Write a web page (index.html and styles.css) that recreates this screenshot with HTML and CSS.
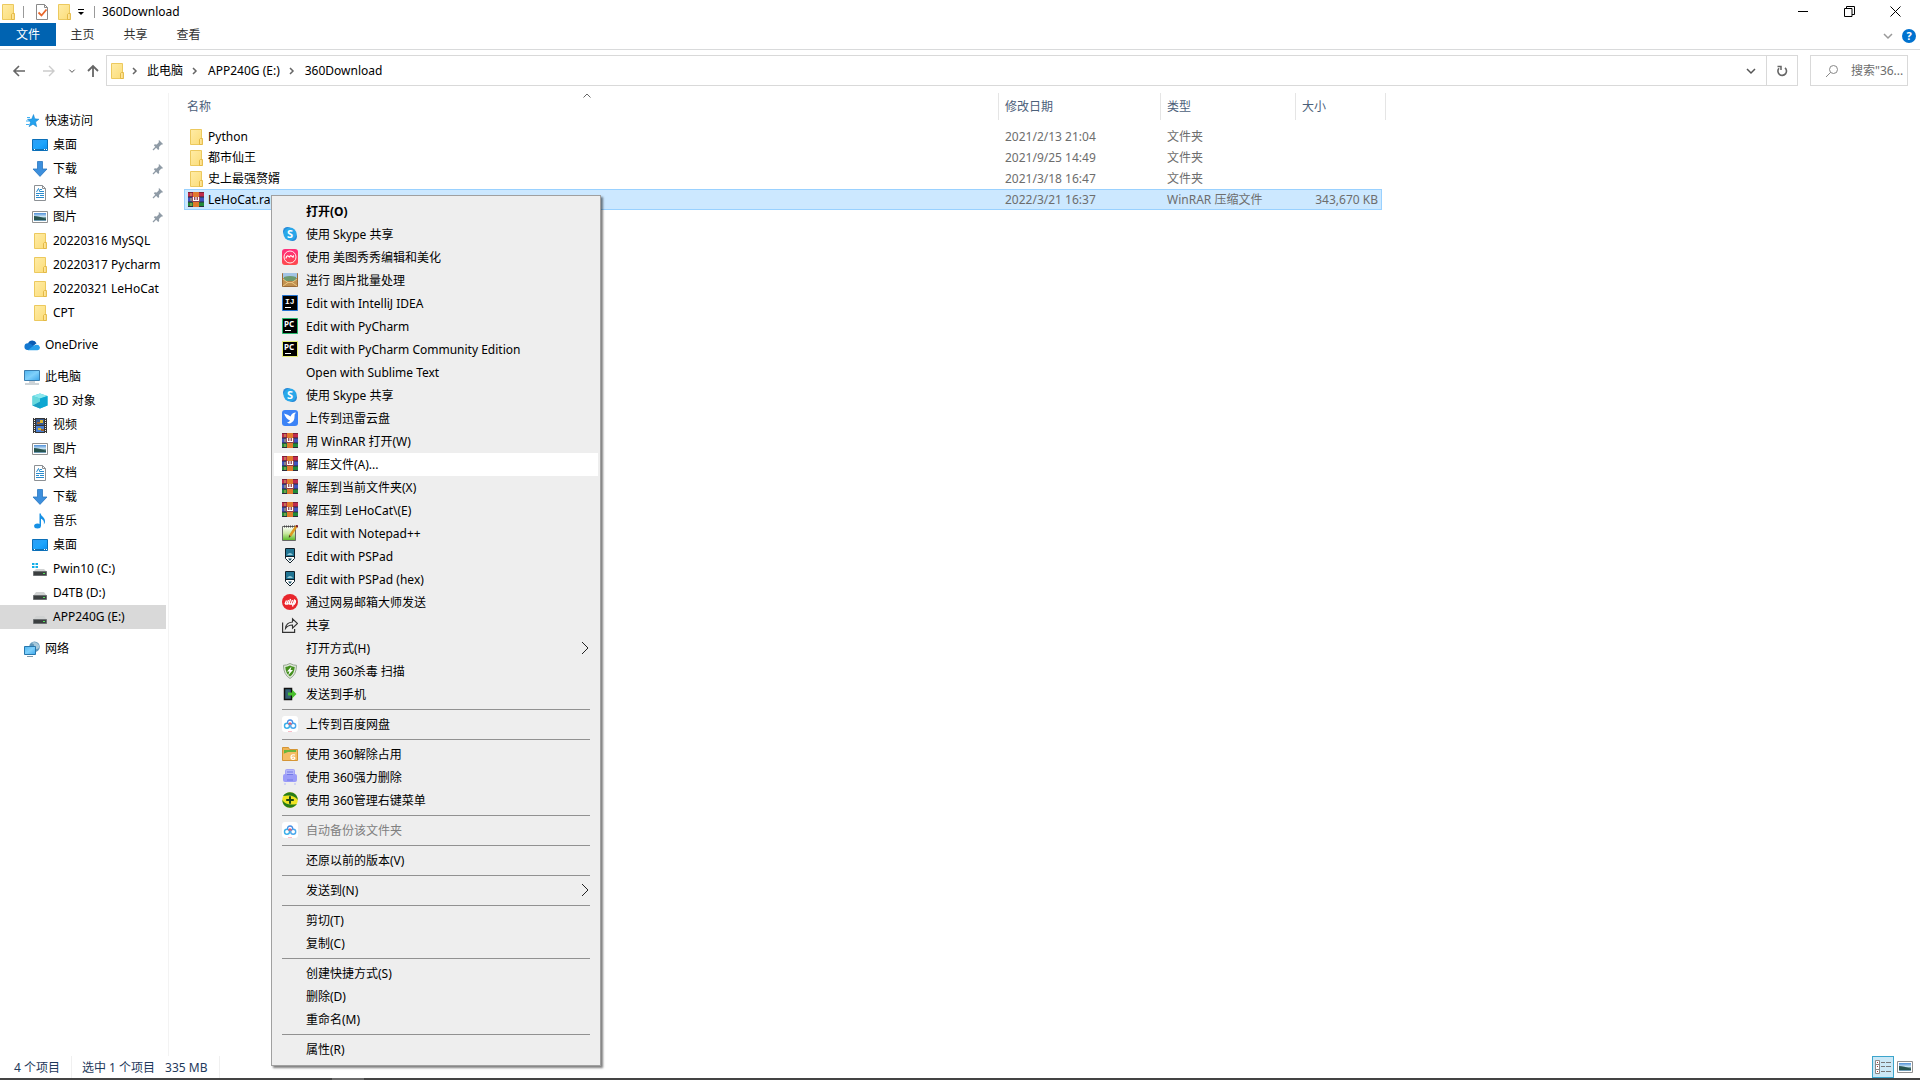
FILE: index.html
```html
<!DOCTYPE html>
<html lang="zh-CN">

<head>
    <meta charset="UTF-8">
    <meta name="viewport" content="width=device-width, initial-scale=1.0">
    <title>360Download</title>
    <link rel="stylesheet" href="styles.css">
</head>

<body>
    <!-- Icon sprite -->
    <svg class="sprite" aria-hidden="true">
        <defs>
            <linearGradient id="gFolder" x1="0" y1="0" x2="1" y2="1">
                <stop offset="0" stop-color="#ffeca6"/>
                <stop offset="1" stop-color="#fbdc78"/>
            </linearGradient>
            <linearGradient id="gScreen" x1="0" y1="0" x2="1" y2="1">
                <stop offset="0" stop-color="#2f9df4"/>
                <stop offset="0.5" stop-color="#1ea5fd"/>
                <stop offset="1" stop-color="#0a8ff0"/>
            </linearGradient>
            <linearGradient id="gPc" x1="0" y1="0" x2="1" y2="1">
                <stop offset="0" stop-color="#4fb4ef"/>
                <stop offset="0.5" stop-color="#7fd0fb"/>
                <stop offset="1" stop-color="#3ca6ea"/>
            </linearGradient>
            <linearGradient id="gPhoto" x1="0" y1="0" x2="0" y2="1">
                <stop offset="0" stop-color="#4f8fd8"/>
                <stop offset="0.5" stop-color="#d8eef8"/>
                <stop offset="0.6" stop-color="#3c6a68"/>
                <stop offset="1" stop-color="#7ba6c4"/>
            </linearGradient>
            <linearGradient id="gMeitu" x1="0" y1="0" x2="0" y2="1">
                <stop offset="0" stop-color="#ff2d7c"/>
                <stop offset="1" stop-color="#ff4a4c"/>
            </linearGradient>
            <linearGradient id="gPad" x1="0" y1="0" x2="0" y2="1">
                <stop offset="0" stop-color="#ffffff"/>
                <stop offset="0.5" stop-color="#c8e8a0"/>
                <stop offset="1" stop-color="#56b822"/>
            </linearGradient>
        </defs>

        <symbol id="folder" viewBox="0 0 16 16">
            <path d="M2.500.5h11v9.200h.8v5.800H2.500z" fill="url(#gFolder)" stroke="#ecc95e"/>
            <path d="M11.500 15.500v-5.200l1-.8h1.800v6z" fill="#ffe596" stroke="#e3b946"/>
        </symbol>
        <symbol id="doc-check" viewBox="0 0 16 16">
            <path d="M2.500.5h8l3 3v12h-11z" fill="#fff" stroke="#8a8a8a"/>
            <path d="M10.500.5v3h3" fill="none" stroke="#8a8a8a"/>
            <path d="M4.500 8.500l3 3 5-6" fill="none" stroke="#e8672c" stroke-width="1.800"/>
        </symbol>
        <symbol id="star" viewBox="0 0 16 16">
            <path d="M9.500 1.500l1.300 4.300 4.200.4-3.400 2.800 1.100 4.700-3.700-2.500-4 2.500 1.500-4.500L3.500 6.200l4.200-.1z" fill="#25a2ee" stroke="#1381cc" stroke-width=".5"/>
            <path d="M3 4.500h3M2 8h3M2 11.500h3" stroke="#3fb1f3" stroke-width="1"/>
        </symbol>
        <symbol id="desktop" viewBox="0 0 16 16">
            <path d="M.5 2.500h15v11H.5z" fill="url(#gScreen)" stroke="#0b6fb8"/>
            <path d="M1 12.500h14" stroke="#126fae"/>
            <path d="M2 12.500h1m9 0h1m1 0h1" stroke="#fff"/>
        </symbol>
        <symbol id="download" viewBox="0 0 16 16">
            <path d="M5.500.5h5v7.500h4.500L8 15.400 1 8h4.500z" fill="#3c8fdd" stroke="#2a76bf" stroke-width=".8"/>
        </symbol>
        <symbol id="document" viewBox="0 0 16 16">
            <path d="M2.500.5h8l3 3v12h-11z" fill="#fff" stroke="#8c9094"/>
            <path d="M10.500.5v3h3" fill="none" stroke="#8c9094"/>
            <path d="M8 4.500h2M4.500 7l2-3.500L8 7M8 6.500h4M4 8.500h8M4 10.500h3M8 10.500h4M4 12.500h8" fill="none" stroke="#2a8ccd"/>
        </symbol>
        <symbol id="picture" viewBox="0 0 16 16">
            <path d="M.5 2.500h15v11H.5z" fill="#fff" stroke="#909090"/>
            <path d="M2 4h12v8H2z" fill="url(#gPhoto)"/>
            <path d="M2 7q5 0 12 3v1H2z" fill="#28544f"/>
        </symbol>
        <symbol id="pin" viewBox="0 0 12 12">
            <path d="M7 1l4 4-1 .8-.6-.2-2.400 2.400.2 2-1 1L1.800 6.200l1-1 2 .2 2.200-2.300-.4-1z" fill="#8f9ba6"/>
            <path d="M4 8l-3 3" stroke="#8f9ba6" stroke-width="1.300"/>
        </symbol>
        <symbol id="onedrive" viewBox="0 0 16 16">
            <path d="M4 6.500a4.600 4.600 0 0 1 8.500-.2L8 10z" fill="#0a5cb4"/>
            <path d="M3.600 13A3.300 3.300 0 0 1 4 6.300q1.400-.3 3 .7l4 3.500L5 13z" fill="#1478d0"/>
            <path d="M3.800 13.200l6-4.700q5-2 6.100 1.800.2 2.500-2.400 2.900z" fill="#28a0ea"/>
        </symbol>
        <symbol id="pc" viewBox="0 0 16 16">
            <path d="M.5 1.500h15v10H.5z" fill="url(#gPc)" stroke="#3b7eaf"/>
            <path d="M5 13h6M1 15h14" stroke="#9aa7b0"/>
        </symbol>
        <symbol id="cube" viewBox="0 0 16 16">
            <path d="M8 .5l7.500 2.500v9.500L8 15.500.5 12.500V3z" fill="#35c4dc"/>
            <path d="M8 .5L15.500 3 8 5.500.5 3z" fill="#8ce8ee"/>
            <path d="M8 5.500L15.500 3v9.500L8 15.500z" fill="#0da7d2"/>
            <path d="M.5 12.500L8 8.500v7z" fill="#1a9ec2"/>
            <path d="M.5 3l7.500 2.500v3l-7.500 4z" fill="#68d8dc"/>
        </symbol>
        <symbol id="video" viewBox="0 0 16 16">
            <path d="M1 1h14v15H1z" fill="#353535"/>
            <path d="M2.500 1v15m11-15v15" stroke="#eee" stroke-dasharray="1 1"/>
            <path d="M4 2h8v6H4z" fill="#36598f"/>
            <path d="M4 9h8v6H4z" fill="#4a7fd0"/>
            <path d="M8 3h3v3H8zM6 11h3v2H6z" fill="#d7b531"/>
            <path d="M5 5h3v2H5zM9 12h3v2H9z" fill="#9b622c"/>
        </symbol>
        <symbol id="music" viewBox="0 0 16 16">
            <ellipse cx="5.500" cy="13" rx="3.400" ry="2.500" fill="#1690e4"/>
            <path d="M7.500 13V.5h1.300c0 3 4.700 3.500 4.200 8.500-.1 1-.7 1.800-1.200 2.400.8-3.400-1-5-2.800-5.600V13z" fill="#1690e4"/>
        </symbol>
        <symbol id="drive" viewBox="0 0 16 16">
            <path d="M4 7h8l3 4H1z" fill="#d0d2d2"/>
            <path d="M1.500 10.500h13v4h-13z" fill="#3b3f40" stroke="#6c7072"/>
            <path d="M11 12.500h2" stroke="#54e45a"/>
        </symbol>
        <symbol id="windrive" viewBox="0 0 16 16">
            <path d="M4 8h8l3 3H1z" fill="#d0d2d2"/>
            <path d="M1.500 10.500h13v4h-13z" fill="#3b3f40" stroke="#6c7072"/>
            <path d="M11 12.500h2" stroke="#54e45a"/>
            <path d="M0 2h2.500v2H0zm3.500 0H6v2H3.500zM0 5h2.500v2H0zm3.500 0H6v2H3.500z" fill="#13aee8"/>
        </symbol>
        <symbol id="network" viewBox="0 0 16 16">
            <circle cx="10.500" cy="5.800" r="5.300" fill="#5f96b9"/>
            <path d="M7 2q4 1 3 3T7 7q3 2 6 1t2-4q-2-3-5-3z" fill="#a9c9da"/>
            <path d="M.5 5.500h11v8H.5z" fill="url(#gPc)" stroke="#2777ad"/>
            <path d="M3 15.500h6" stroke="#7e98a8"/>
        </symbol>
        <symbol id="winrar" viewBox="0 0 16 16">
            <path d="M0 0h16v5H0z" fill="#c02a4c"/>
            <path d="M0 5h16v5H0z" fill="#3f52bd"/>
            <path d="M0 10h16v5H0z" fill="#218a39"/>
            <path d="M0 .5h16" stroke="#7d2036"/>
            <path d="M0 5h16M0 10h16M0 14.500h16" stroke="#2b2b3c"/>
            <path d="M3 1v3m0 2v3m0 2v3" stroke="#c8b85a"/>
            <path d="M5 0h6v15H5z" fill="#e07a2c"/>
            <path d="M4 5h8v5H4z" fill="#8c3f50"/>
            <path d="M5.500 5v3.500h5V5M8 5v3.500" fill="none" stroke="#fff" stroke-width="1.200"/>
        </symbol>
        <symbol id="skype" viewBox="0 0 16 16">
            <circle cx="5.500" cy="5.500" r="4.500" fill="#2789d8"/>
            <circle cx="10.500" cy="10.500" r="4.500" fill="#2789d8"/>
            <circle cx="8" cy="8" r="6.500" fill="#29a7e9"/>
        </symbol>
        <symbol id="meitu" viewBox="0 0 16 16">
            <rect width="16" height="16" rx="3" fill="url(#gMeitu)"/>
            <circle cx="8" cy="8" r="6" fill="none" stroke="#fff" stroke-width=".9"/>
            <path d="M4 9.500q.5-3 2-2.500t1.500 1.500q.5-2.500 2-1.500t1.500 1.500q.5-2 1-2" fill="none" stroke="#fff" stroke-width="1.200"/>
        </symbol>
        <symbol id="batch" viewBox="0 0 16 16">
            <path d="M.5 1.500h15v13H.5z" fill="#b8824a" stroke="#9a6a38"/>
            <path d="M1 1h14v5H1z" fill="#a3c4e5"/>
            <path d="M2 5q6-2 12 0v4H2z" fill="#6d9a70"/>
            <path d="M1 7l5 4h4l5-4v7H1z" fill="#c29150"/>
            <path d="M1 14l5-3.500h4l5 3.500M1 7l5 3.500m9-3.500l-5 3.500" fill="none" stroke="#f2d491" stroke-width=".8"/>
        </symbol>
        <symbol id="idea" viewBox="0 0 16 16">
            <path d="M.5.5h15v15H.5z" fill="#000" stroke="#2474d2"/>
            <path d="M3 12.500h6" stroke="#fff"/>
        </symbol>
        <symbol id="pycharm" viewBox="0 0 16 16">
            <path d="M.5.5h15v15H.5z" fill="#000" stroke="#27b76c"/>
            <path d="M3 12.500h6" stroke="#fff"/>
        </symbol>
        <symbol id="pycharm-ce" viewBox="0 0 16 16">
            <path d="M.5.5h15v15H.5z" fill="#000" stroke="#e7ef73"/>
            <path d="M3 12.500h6" stroke="#fff"/>
        </symbol>
        <symbol id="xunlei" viewBox="0 0 16 16">
            <rect width="16" height="16" rx="3" fill="#3c83f6"/>
            <path d="M2 3.500q4 1 6.500 3 1.500-4 5.500-4-2 1.500-1.500 4.500 0 4.500-4.500 6.500-2 0-3-1 2.500-.5 3-2Q4 9 2 3.500z" fill="#fff"/>
        </symbol>
        <symbol id="notepad" viewBox="0 0 16 16">
            <path d="M.5 1.500h13v14H.5z" fill="url(#gPad)" stroke="#666"/>
            <path d="M2 1.500h11" stroke="#444" stroke-width="2" stroke-dasharray="1 1"/>
            <path d="M14.500 1L8 11" stroke="#dd9a22" stroke-width="2.500"/>
            <path d="M14 .5l2 1.300" stroke="#7a1d28" stroke-width="2"/>
            <path d="M7 10l1.800 1.200L6.800 13z" fill="#4a3a20"/>
        </symbol>
        <symbol id="pspad" viewBox="0 0 16 16">
            <path d="M3.500.5h9v10L8 15l-4.500-4.500z" fill="#fff" stroke="#10202a"/>
            <path d="M4 1h8v7H4z" fill="#217594"/>
            <path d="M5 7q3-4 6 0z" fill="#95cad8"/>
            <path d="M3 8.500h10" stroke="#10202a"/>
            <path d="M6 10.500h4L8 13z" fill="#1c5268"/>
        </symbol>
        <symbol id="mail" viewBox="0 0 16 16">
            <circle cx="8" cy="8" r="8" fill="#e8262c"/>
            <path d="M3 10L4.500 6.500M5 10l1.500-4M7 10l1.500-5M9 10l1.500-4M3 10h3.500M10.500 12.500l2-6.500q2 1 0 4H7" fill="none" stroke="#fff" stroke-width="1.300"/>
        </symbol>
        <symbol id="share" viewBox="0 0 16 16">
            <path d="M.6 5.500v9.800h12V12" fill="none" stroke="#333" stroke-width="1.200"/>
            <path d="M3.500 11.500Q4 5.500 10.500 5V1.800L15.500 6.500l-5 4.700V8Q6 8 3.500 11.500z" fill="none" stroke="#333" stroke-width="1.100"/>
        </symbol>
        <symbol id="shield" viewBox="0 0 16 16">
            <path d="M8 .5q3.500 2 6.500 1.800 0 9.500-6.500 13.200Q1.500 11.800 1.500 2.300 4.500 2.500 8 .5z" fill="#e3eadf" stroke="#94a68e"/>
            <path d="M8 2.500q2.500 1.400 4.700 1.400-.3 6.500-4.700 9.600Q3.600 10.400 3.300 3.900 5.500 3.900 8 2.500z" fill="#45911f"/>
            <path d="M9.500 3.500L5 8.500h2.500L6 12.500l5-5.500H8.500z" fill="#fff"/>
        </symbol>
        <symbol id="phone" viewBox="0 0 16 16">
            <path d="M2.500 2.500h7v11h-7z" fill="#356274" stroke="#111" stroke-width="1.500"/>
            <path d="M6 6.500h4V3.500L14.500 8 10 12.500v-3H6z" fill="#48be2c"/>
        </symbol>
        <symbol id="baidu" viewBox="0 0 16 16">
            <rect width="16" height="16" rx="3" fill="#fff"/>
            <circle cx="5" cy="9.700" r="2.500" fill="none" stroke="#3aafe9" stroke-width="1.400"/>
            <circle cx="11.200" cy="9.700" r="2.500" fill="none" stroke="#4aa8ed" stroke-width="1.400"/>
            <path d="M5.500 7q0-3 2.600-3t2.600 3" fill="none" stroke="#4a90e6" stroke-width="1.300"/>
            <path d="M6.500 8.500L8 7l1.500 1.500" fill="none" stroke="#ef5365" stroke-width="1.300"/>
            <path d="M6 15.500h4" stroke="#f6a0b0" stroke-width=".7"/>
        </symbol>
        <symbol id="unlock" viewBox="0 0 16 16">
            <path d="M.5 14.500v-13h6l1 2h8v11z" fill="#efb455" stroke="#d59534"/>
            <path d="M2 4h12v4H2z" fill="#69b63c"/>
            <path d="M1 8l5-2h9v8H1z" fill="#f5bd64"/>
            <path d="M13 9q-4-1-4 2 0 2.500 2.200 2.300 2-.2 1.500-1.600-.8-1.300-3-.2" fill="none" stroke="#fff" stroke-width="1.200"/>
        </symbol>
        <symbol id="shred" viewBox="0 0 16 16">
            <rect x="3.500" y=".5" width="9" height="7" rx="1" fill="#b6b8fa" stroke="#a3a3f6"/>
            <rect x="1" y="5" width="14" height="8" rx="2" fill="#9b9cf8"/>
            <path d="M5 3h6M5 5.500h6M5 11h6" stroke="#7379e6"/>
            <path d="M3 14v2m10-2v2" stroke="#b6b8fa"/>
        </symbol>
        <symbol id="manage" viewBox="0 0 16 16">
            <circle cx="8" cy="8" r="7.800" fill="#efe423"/>
            <path d="M1 4Q5-1 11 .8q4.500 2 4.700 7.200Q12 2 1 4zM15 12Q11 17 5 15.200.500 13.200.3 8 4 14 15 12z" fill="#277d1b"/>
            <path d="M8 4.200v7.600M4.200 8h7.600" stroke="#1d4a17" stroke-width="2"/>
        </symbol>
        <symbol id="crumb" viewBox="0 0 8 12">
            <path d="M2 3l3 3-3 3" fill="none" stroke="#666" stroke-width="1.500"/>
        </symbol>
        <symbol id="chev-down" viewBox="0 0 12 12">
            <path d="M2 4l4 4 4-4" fill="none" stroke="currentColor" stroke-width="1.500"/>
        </symbol>
        <symbol id="submenu" viewBox="0 0 8 14">
            <path d="M1 1l6 6-6 6" fill="none" stroke="#222"/>
        </symbol>
    </svg>

    <header class="titlebar">
        <svg class="icon"><use href="#folder"/></svg>
        <span class="bar"></span>
        <button class="quick" aria-label="属性"><svg class="icon"><use href="#doc-check"/></svg></button>
        <button class="quick" aria-label="新建文件夹"><svg class="icon"><use href="#folder"/></svg></button>
        <button class="quick narrow" aria-label="自定义快速访问工具栏">
            <svg width="8" height="8" viewBox="0 0 8 8"><path d="M1 1.500h6" stroke="#000"/><path d="M1 4h6L4 7z"/></svg>
        </button>
        <span class="bar"></span>
        <h1 class="title">360Download</h1>
        <div class="controls">
            <button class="control" aria-label="最小化"><svg width="11" height="11" viewBox="0 0 11 11"><path d="M0 5.500h10" stroke="#000"/></svg></button>
            <button class="control" aria-label="还原"><svg width="11" height="11" viewBox="0 0 11 11"><path d="M.5 2.500h7.500v8H.5zM2.500 2.500v-2h8v8H8" fill="none" stroke="#000"/></svg></button>
            <button class="control" aria-label="关闭"><svg width="11" height="11" viewBox="0 0 11 11"><path d="M.5.5l10 10m0-10l-10 10" stroke="#000"/></svg></button>
        </div>
    </header>

    <nav class="tabs">
        <button class="tab file">文件</button>
        <button class="tab">主页</button>
        <button class="tab">共享</button>
        <button class="tab">查看</button>
        <div class="tabs-end">
            <button class="plain light" aria-label="展开功能区"><svg width="12" height="12"><use href="#chev-down"/></svg></button>
            <button class="help" aria-label="帮助">?</button>
        </div>
    </nav>

    <div class="toolbar">
        <div class="history">
            <button class="plain" aria-label="返回"><svg width="14" height="14" viewBox="0 0 14 14"><path d="M13 7H2m5-5L2 7l5 5" fill="none" stroke="#666" stroke-width="1.600"/></svg></button>
            <button class="plain" aria-label="前进"><svg width="14" height="14" viewBox="0 0 14 14"><path d="M1 7h11M7 2l5 5-5 5" fill="none" stroke="#ccc" stroke-width="1.400"/></svg></button>
            <button class="plain small" aria-label="最近浏览的位置"><svg width="8" height="8" viewBox="0 0 12 12"><use href="#chev-down"/></svg></button>
            <button class="plain" aria-label="上移"><svg width="14" height="14" viewBox="0 0 14 14"><path d="M7 13V2M2 7l5-5 5 5" fill="none" stroke="#666" stroke-width="1.800"/></svg></button>
        </div>
        <div class="address">
            <svg class="icon"><use href="#folder"/></svg>
            <svg class="crumb"><use href="#crumb"/></svg>
            <a href="#">此电脑</a>
            <svg class="crumb"><use href="#crumb"/></svg>
            <a href="#">APP240G (E:)</a>
            <svg class="crumb"><use href="#crumb"/></svg>
            <a href="#">360Download</a>
            <button class="plain drop" aria-label="以前的位置"><svg width="12" height="12"><use href="#chev-down"/></svg></button>
            <button class="refresh" aria-label="刷新">
                <svg width="12" height="12" viewBox="0 0 12 12"><path d="M9 2.800A4.300 4.300 0 1 1 3 3.200" fill="none" stroke="#666" stroke-width="1.600"/><path d="M1.500 1.500H5V5" fill="none" stroke="#666" stroke-width="1.500"/></svg>
            </button>
        </div>
        <label class="search">
            <svg width="14" height="14" viewBox="0 0 14 14"><circle cx="8.500" cy="5.500" r="4" fill="none" stroke="#888"/><path d="M5.600 8.400L1 13" stroke="#888"/></svg>
            <input type="text" placeholder='搜索"36...' aria-label="搜索">
        </label>
    </div>

    <main class="main">
        <nav class="sidebar">
            <div class="group">
                <a class="root" href="#"><svg class="icon"><use href="#star"/></svg>快速访问</a>
                <a href="#"><svg class="icon"><use href="#desktop"/></svg>桌面<svg class="pin"><use href="#pin"/></svg></a>
                <a href="#"><svg class="icon"><use href="#download"/></svg>下载<svg class="pin"><use href="#pin"/></svg></a>
                <a href="#"><svg class="icon"><use href="#document"/></svg>文档<svg class="pin"><use href="#pin"/></svg></a>
                <a href="#"><svg class="icon"><use href="#picture"/></svg>图片<svg class="pin"><use href="#pin"/></svg></a>
                <a href="#"><svg class="icon"><use href="#folder"/></svg>20220316 MySQL</a>
                <a href="#"><svg class="icon"><use href="#folder"/></svg>20220317 Pycharm</a>
                <a href="#"><svg class="icon"><use href="#folder"/></svg>20220321 LeHoCat</a>
                <a href="#"><svg class="icon"><use href="#folder"/></svg>CPT</a>
            </div>
            <div class="group">
                <a class="root" href="#"><svg class="icon"><use href="#onedrive"/></svg>OneDrive</a>
            </div>
            <div class="group">
                <a class="root" href="#"><svg class="icon"><use href="#pc"/></svg>此电脑</a>
                <a href="#"><svg class="icon"><use href="#cube"/></svg>3D 对象</a>
                <a href="#"><svg class="icon"><use href="#video"/></svg>视频</a>
                <a href="#"><svg class="icon"><use href="#picture"/></svg>图片</a>
                <a href="#"><svg class="icon"><use href="#document"/></svg>文档</a>
                <a href="#"><svg class="icon"><use href="#download"/></svg>下载</a>
                <a href="#"><svg class="icon"><use href="#music"/></svg>音乐</a>
                <a href="#"><svg class="icon"><use href="#desktop"/></svg>桌面</a>
                <a href="#"><svg class="icon"><use href="#windrive"/></svg>Pwin10 (C:)</a>
                <a href="#"><svg class="icon"><use href="#drive"/></svg>D4TB (D:)</a>
                <a class="current" href="#"><svg class="icon"><use href="#drive"/></svg>APP240G (E:)</a>
            </div>
            <div class="group">
                <a class="root" href="#"><svg class="icon"><use href="#network"/></svg>网络</a>
            </div>
        </nav>

        <section class="files">
            <table>
                <colgroup>
                    <col class="col-name">
                    <col class="col-date">
                    <col class="col-type">
                    <col class="col-size">
                    <col class="col-end">
                </colgroup>
                <thead>
                    <tr>
                        <th>名称<svg class="sort" viewBox="0 0 8 5"><path d="M.5 4.500L4 1l3.500 3.500" fill="none" stroke="#666"/></svg></th>
                        <th>修改日期</th>
                        <th>类型</th>
                        <th colspan="2">大小</th>
                    </tr>
                </thead>
                <tbody>
                    <tr>
                        <td><span class="name"><svg class="icon"><use href="#folder"/></svg>Python</span></td>
                        <td>2021/2/13 21:04</td>
                        <td>文件夹</td>
                        <td></td>
                    </tr>
                    <tr>
                        <td><span class="name"><svg class="icon"><use href="#folder"/></svg>都市仙王</span></td>
                        <td>2021/9/25 14:49</td>
                        <td>文件夹</td>
                        <td></td>
                    </tr>
                    <tr>
                        <td><span class="name"><svg class="icon"><use href="#folder"/></svg>史上最强赘婿</span></td>
                        <td>2021/3/18 16:47</td>
                        <td>文件夹</td>
                        <td></td>
                    </tr>
                    <tr class="selected">
                        <td><span class="name"><svg class="icon"><use href="#winrar"/></svg>LeHoCat.rar</span></td>
                        <td>2022/3/21 16:37</td>
                        <td>WinRAR 压缩文件</td>
                        <td class="size">343,670 KB</td>
                    </tr>
                </tbody>
            </table>
        </section>
    </main>

    <footer class="status">
        <span class="count">4 个项目</span>
        <span class="count">选中 1 个项目<span class="total">335 MB</span></span>
        <div class="views">
            <button class="view active" aria-label="详细信息">
                <svg width="16" height="14" viewBox="0 0 16 14"><path d="M.5.5h4v13h-4zM.5 4.500h4m-4 5h4" fill="#fff" stroke="#888"/><path d="M2 2.500h1m-1 4h1m-1 5h1" stroke="#a33"/><path d="M6 2.500h4m1 0h5M6 6.500h4m1 0h5M6 11.500h4m1 0h5" stroke="#777"/></svg>
            </button>
            <button class="view" aria-label="大缩略图"><svg class="icon"><use href="#picture"/></svg></button>
        </div>
    </footer>
    <div class="taskbar"><span class="running"></span></div>

    <!-- Right-click menu -->
    <div class="menu" role="menu">
        <button class="item default">打开(O)</button>
        <button class="item"><svg class="icon" viewBox="0 0 16 16"><use href="#skype"/><text x="8" y="12" text-anchor="middle" class="glyph big">S</text></svg>使用 Skype 共享</button>
        <button class="item"><svg class="icon"><use href="#meitu"/></svg>使用 美图秀秀编辑和美化</button>
        <button class="item"><svg class="icon"><use href="#batch"/></svg>进行 图片批量处理</button>
        <button class="item"><svg class="icon" viewBox="0 0 16 16"><use href="#idea"/><text x="3" y="9" class="glyph mono">IJ</text></svg>Edit with IntelliJ IDEA</button>
        <button class="item"><svg class="icon" viewBox="0 0 16 16"><use href="#pycharm"/><text x="2" y="9" class="glyph">PC</text></svg>Edit with PyCharm</button>
        <button class="item"><svg class="icon" viewBox="0 0 16 16"><use href="#pycharm-ce"/><text x="2" y="9" class="glyph">PC</text></svg>Edit with PyCharm Community Edition</button>
        <button class="item">Open with Sublime Text</button>
        <button class="item"><svg class="icon" viewBox="0 0 16 16"><use href="#skype"/><text x="8" y="12" text-anchor="middle" class="glyph big">S</text></svg>使用 Skype 共享</button>
        <button class="item"><svg class="icon"><use href="#xunlei"/></svg>上传到迅雷云盘</button>
        <button class="item"><svg class="icon"><use href="#winrar"/></svg>用 WinRAR 打开(W)</button>
        <button class="item hover"><svg class="icon"><use href="#winrar"/></svg>解压文件(A)...</button>
        <button class="item"><svg class="icon"><use href="#winrar"/></svg>解压到当前文件夹(X)</button>
        <button class="item"><svg class="icon"><use href="#winrar"/></svg>解压到 LeHoCat\(E)</button>
        <button class="item"><svg class="icon"><use href="#notepad"/></svg>Edit with Notepad++</button>
        <button class="item"><svg class="icon"><use href="#pspad"/></svg>Edit with PSPad</button>
        <button class="item"><svg class="icon"><use href="#pspad"/></svg>Edit with PSPad (hex)</button>
        <button class="item"><svg class="icon"><use href="#mail"/></svg>通过网易邮箱大师发送</button>
        <button class="item"><svg class="icon"><use href="#share"/></svg>共享</button>
        <button class="item">打开方式(H)<svg class="arrow"><use href="#submenu"/></svg></button>
        <button class="item"><svg class="icon"><use href="#shield"/></svg>使用 360杀毒 扫描</button>
        <button class="item"><svg class="icon"><use href="#phone"/></svg>发送到手机</button>
        <hr>
        <button class="item"><svg class="icon"><use href="#baidu"/></svg>上传到百度网盘</button>
        <hr>
        <button class="item"><svg class="icon"><use href="#unlock"/></svg>使用 360解除占用</button>
        <button class="item"><svg class="icon"><use href="#shred"/></svg>使用 360强力删除</button>
        <button class="item"><svg class="icon"><use href="#manage"/></svg>使用 360管理右键菜单</button>
        <hr>
        <button class="item" disabled><svg class="icon"><use href="#baidu"/></svg>自动备份该文件夹</button>
        <hr>
        <button class="item">还原以前的版本(V)</button>
        <hr>
        <button class="item">发送到(N)<svg class="arrow"><use href="#submenu"/></svg></button>
        <hr>
        <button class="item">剪切(T)</button>
        <button class="item">复制(C)</button>
        <hr>
        <button class="item">创建快捷方式(S)</button>
        <button class="item">删除(D)</button>
        <button class="item">重命名(M)</button>
        <hr>
        <button class="item">属性(R)</button>
    </div>
</body>

</html>
```
FILE: styles.css
```css
* {
    box-sizing: border-box;
}

body {
    margin: 0;
    height: 100vh;
    display: flex;
    flex-direction: column;
    overflow: hidden;
    background-color: #fff;
    color: #000;
    font-family: "Noto Sans", "Noto Sans CJK SC", sans-serif;
    font-size: 12px;
    line-height: 20px;
}

button,
input {
    margin: 0;
    padding: 0;
    border: none;
    background: none;
    color: inherit;
    font: inherit;
}

a {
    color: inherit;
    text-decoration: none;
}

svg {
    display: block;
    flex: none;
}

.sprite {
    position: absolute;
    width: 0;
    height: 0;
}

.glyph {
    fill: #fff;
    font-family: "Noto Sans", sans-serif;
    font-size: 8px;
    font-weight: bold;
}

.glyph.big {
    font-size: 11px;
}

.glyph.mono {
    font-family: "Liberation Mono", monospace;
}

.icon {
    width: 16px;
    height: 16px;
}

/* Title bar */
.titlebar {
    display: flex;
    align-items: center;
    height: 23px;
}

.bar {
    width: 1px;
    height: 12px;
    margin: 0 7px;
    background-color: #999;
}

.quick {
    display: flex;
    justify-content: center;
    width: 22px;
}

.quick.narrow {
    width: 12px;
}

.title {
    margin: 0;
    font-size: 12px;
    font-weight: normal;
}

.controls {
    display: flex;
    margin-left: auto;
    padding-right: 2px;
}

.control {
    display: flex;
    align-items: center;
    justify-content: center;
    width: 46px;
    height: 20px;
}

/* Ribbon tabs */
.tabs {
    display: flex;
    height: 27px;
    border-bottom: 1px solid #d9dadb;
}

.tab {
    width: 53px;
    height: 23px;
    padding-top: 1px;
    color: #333;
}

.tab.file {
    width: 56px;
    background-color: #0063b1;
    color: #fff;
}

.tabs-end {
    display: flex;
    align-items: center;
    gap: 8px;
    margin-left: auto;
    padding-right: 4px;
}

.plain {
    display: flex;
    align-items: center;
    justify-content: center;
    color: #555;
}

.plain.light {
    color: #999;
}

.help {
    width: 14px;
    height: 14px;
    border-radius: 50%;
    background-color: #0072cf;
    color: #fff;
    font-size: 11px;
    font-weight: bold;
    line-height: 14px;
}

/* Address bar */
.toolbar {
    display: flex;
    height: 36px;
    padding-top: 5px;
    padding-right: 12px;
}

.history {
    display: flex;
    align-items: center;
    width: 106px;
    padding-left: 12px;
    gap: 16px;
}

.history .small {
    margin: 0 -6px 0 -4px;
}

.address {
    display: flex;
    align-items: center;
    flex: 1;
    border: 1px solid #d9d9d9;
    padding-left: 2px;
}

.crumb {
    width: 8px;
    height: 12px;
    margin: 0 9px 0 8px;
}

.icon + .crumb {
    margin: 0 8px 0 6px;
}

.drop {
    width: 30px;
    height: 29px;
    margin-left: auto;
}

.refresh {
    display: flex;
    align-items: center;
    justify-content: center;
    width: 31px;
    height: 29px;
    border-left: 1px solid #d9d9d9;
}

.search {
    display: flex;
    align-items: center;
    gap: 12px;
    width: 98px;
    margin-left: 12px;
    padding-left: 14px;
    border: 1px solid #d9d9d9;
}

.search input {
    flex: 1;
    min-width: 0;
    outline: none;
}

.search input::placeholder {
    color: #6d6d6d;
    opacity: 1;
}

/* Folder tree */
.main {
    display: flex;
    flex: 1;
    min-height: 0;
    padding-top: 7px;
}

.sidebar {
    width: 169px;
    padding-top: 16px;
    border-right: 1px solid #f3f3f3;
}

.group {
    margin-bottom: 8px;
}

.sidebar a {
    display: flex;
    align-items: center;
    gap: 5px;
    height: 24px;
    margin-right: 2px;
    padding-left: 32px;
    white-space: nowrap;
}

.sidebar .root {
    padding-left: 24px;
}

.sidebar .current {
    background-color: #d9d9d9;
}

.pin {
    width: 12px;
    height: 12px;
    margin-left: auto;
    margin-right: 2px;
}

/* File list */
.files {
    flex: 1;
    padding-left: 15px;
}

table {
    table-layout: fixed;
    width: 1202px;
    border-spacing: 0;
}

.col-name {
    width: 815px;
}

.col-date {
    width: 162px;
}

.col-type {
    width: 135px;
}

.col-size {
    width: 86px;
}

.col-end {
    width: 4px;
}

th {
    height: 27px;
    padding: 0 6px;
    border-right: 1px solid #e5e5e5;
    color: #4c607a;
    font-weight: normal;
    text-align: left;
}

th:first-child {
    position: relative;
    padding-left: 3px;
}

.sort {
    position: absolute;
    top: 0;
    left: 0;
    right: 8px;
    width: 8px;
    height: 5px;
    margin: 0 auto;
}

thead::after {
    content: "";
    display: block;
    height: 6px;
}

td {
    height: 21px;
    padding: 0 6px;
    color: #6d6d6d;
    line-height: 19px;
}

td:first-child {
    padding-left: 4px;
    color: #000;
}

.name {
    display: flex;
    align-items: center;
    gap: 4px;
}

.selected td {
    border-top: 1px solid #99d1ff;
    border-bottom: 1px solid #99d1ff;
    background-color: #cce8ff;
}

.selected td:first-child {
    padding-left: 3px;
    border-left: 1px solid #99d1ff;
}

.selected td:last-child {
    border-right: 1px solid #99d1ff;
}

.selected .size {
    padding-right: 3px;
    text-align: right;
}

/* Status bar */
.status {
    display: flex;
    align-items: center;
    height: 22px;
    padding-left: 4px;
    color: #1e395b;
}

.count {
    padding: 2px 11px 0 10px;
    border-right: 1px solid #f0f0f0;
}

.total {
    margin-left: 10px;
}

.views {
    display: flex;
    margin-left: auto;
    padding-right: 4px;
}

.view {
    display: flex;
    align-items: center;
    justify-content: center;
    width: 22px;
    height: 22px;
}

.view.active {
    border: 1px solid #3ca5cc;
    background-color: #cbe8f6;
}

.taskbar {
    height: 2px;
    background-color: #444;
}

.running {
    display: block;
    width: 32px;
    height: 2px;
    margin-left: 332px;
    background-color: #6a6a6a;
}

/* Context menu */
.menu {
    position: absolute;
    top: 195px;
    left: 271px;
    width: 330px;
    padding: 4px 2px;
    border: 1px solid #a0a0a0;
    background-color: #eee;
    box-shadow: 2px 2px 2px rgba(0, 0, 0, 0.5);
}

.item {
    display: flex;
    align-items: center;
    gap: 8px;
    width: 100%;
    height: 23px;
    padding: 0 9px 0 32px;
    text-align: left;
    white-space: nowrap;
}

.item:has(.icon) {
    padding-left: 8px;
}

/* icons sit on the upper of the two middle pixels */
.item .icon,
.item .arrow {
    margin-bottom: 1px;
}

.item:hover,
.item.hover {
    background-color: #fff;
}

.item.default {
    font-weight: bold;
}

.item:disabled {
    color: #808080;
}

.arrow {
    width: 8px;
    height: 14px;
    margin-left: auto;
}

.menu hr {
    height: 1px;
    margin: 3px 8px;
    border: none;
    background-color: #919191;
}
```
